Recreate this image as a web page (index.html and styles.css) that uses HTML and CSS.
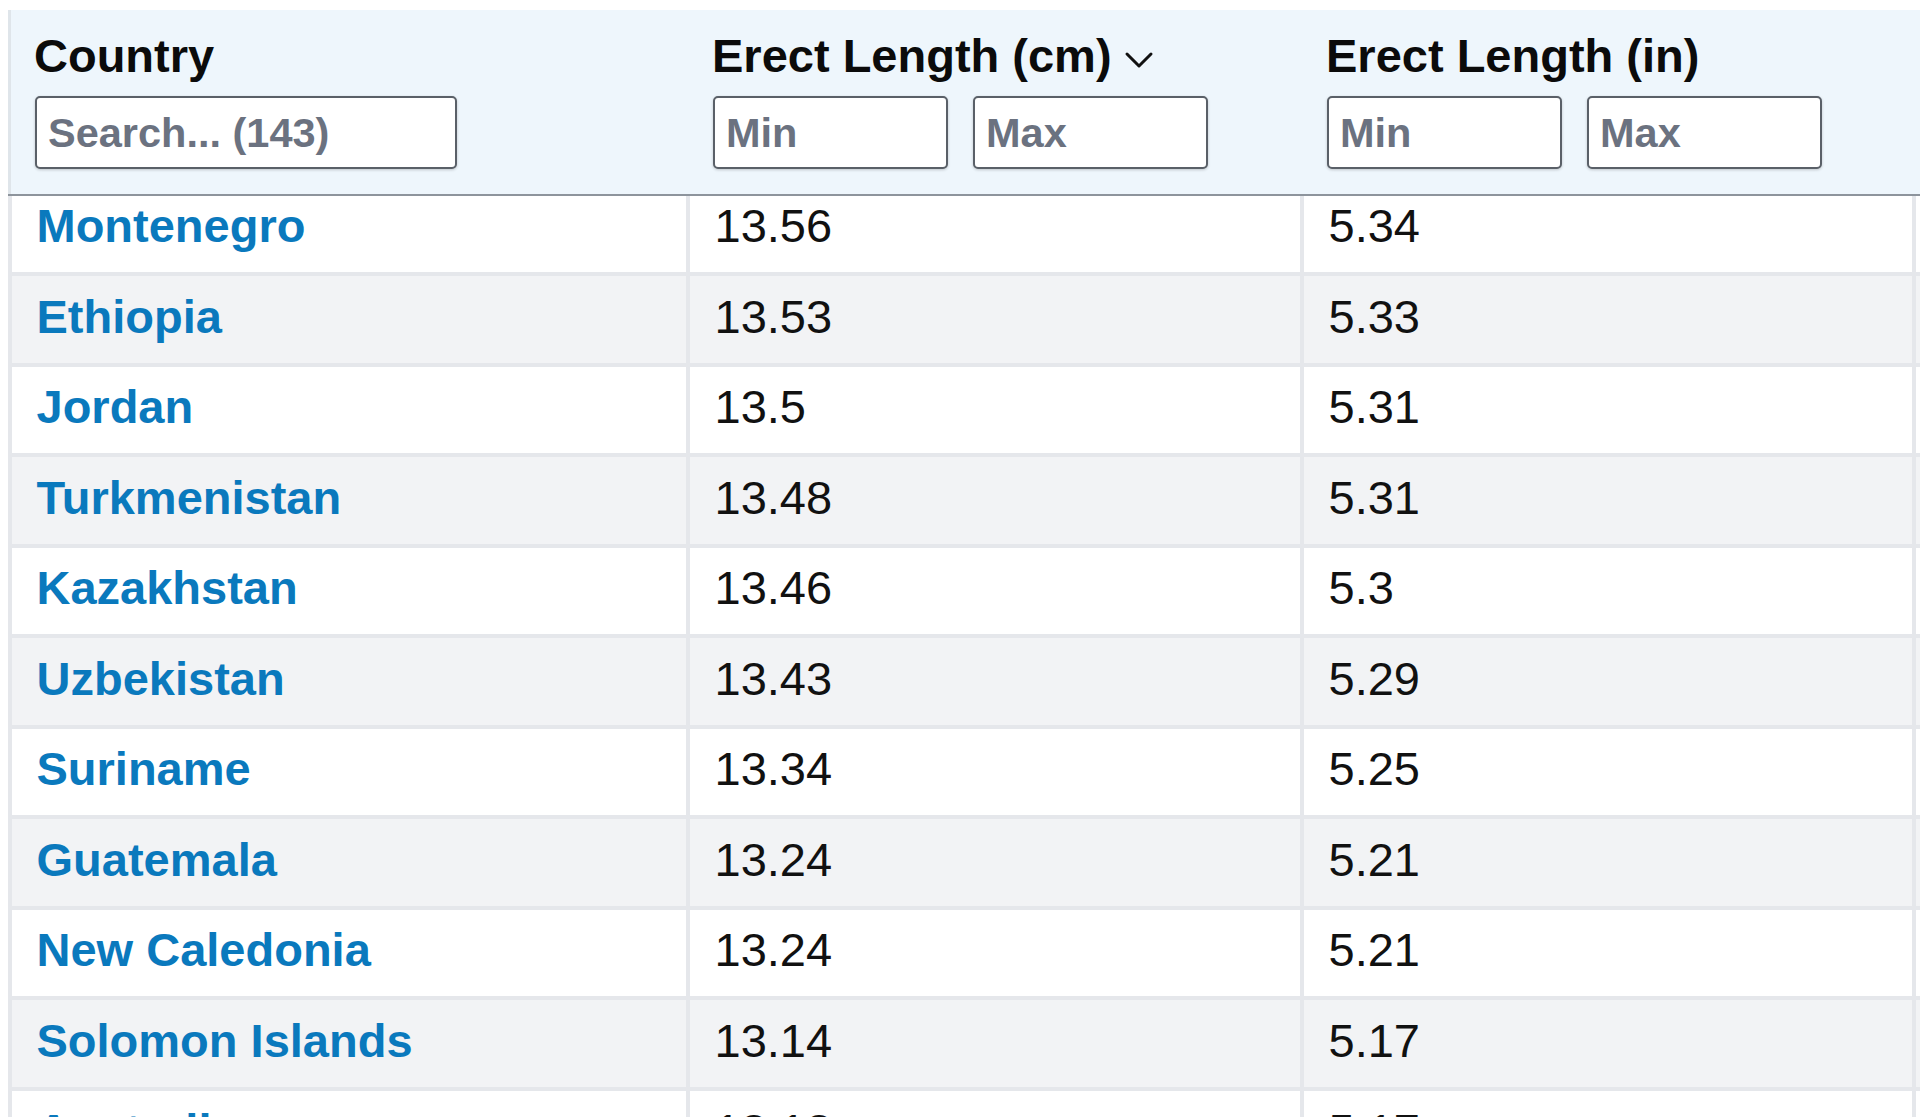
FILE: index.html
```html
<!DOCTYPE html>
<html lang="en">
<head>
<meta charset="utf-8">
<title>Erect Length by Country</title>
<link rel="stylesheet" href="styles.css">
</head>
<body>
<div class="viewport">
  <div class="table">
    <div class="thead">
      <div class="th">
        <div class="th-title">Country</div>
        <div class="filters">
          <input class="search" type="text" placeholder="Search... (143)">
        </div>
      </div>
      <div class="th">
        <div class="th-title">Erect Length (cm)
          <svg class="chev" width="30" height="20" viewBox="0 0 30 20"><path d="M3 4 L15 16 L27 4" fill="none" stroke="#111" stroke-width="3" stroke-linecap="round" stroke-linejoin="round"/></svg>
        </div>
        <div class="filters">
          <input class="range" type="text" placeholder="Min">
          <input class="range" type="text" placeholder="Max">
        </div>
      </div>
      <div class="th">
        <div class="th-title">Erect Length (in)</div>
        <div class="filters">
          <input class="range" type="text" placeholder="Min">
          <input class="range" type="text" placeholder="Max">
        </div>
      </div>
      <div class="th"></div>
    </div>
    <div class="tbody">
      <div class="tr"><div class="td"><a href="#">Montenegro</a></div><div class="td num">13.56</div><div class="td num">5.34</div><div class="td"></div></div>
      <div class="tr"><div class="td"><a href="#">Ethiopia</a></div><div class="td num">13.53</div><div class="td num">5.33</div><div class="td"></div></div>
      <div class="tr"><div class="td"><a href="#">Jordan</a></div><div class="td num">13.5</div><div class="td num">5.31</div><div class="td"></div></div>
      <div class="tr"><div class="td"><a href="#">Turkmenistan</a></div><div class="td num">13.48</div><div class="td num">5.31</div><div class="td"></div></div>
      <div class="tr"><div class="td"><a href="#">Kazakhstan</a></div><div class="td num">13.46</div><div class="td num">5.3</div><div class="td"></div></div>
      <div class="tr"><div class="td"><a href="#">Uzbekistan</a></div><div class="td num">13.43</div><div class="td num">5.29</div><div class="td"></div></div>
      <div class="tr"><div class="td"><a href="#">Suriname</a></div><div class="td num">13.34</div><div class="td num">5.25</div><div class="td"></div></div>
      <div class="tr"><div class="td"><a href="#">Guatemala</a></div><div class="td num">13.24</div><div class="td num">5.21</div><div class="td"></div></div>
      <div class="tr"><div class="td"><a href="#">New Caledonia</a></div><div class="td num">13.24</div><div class="td num">5.21</div><div class="td"></div></div>
      <div class="tr"><div class="td"><a href="#">Solomon Islands</a></div><div class="td num">13.14</div><div class="td num">5.17</div><div class="td"></div></div>
      <div class="tr"><div class="td"><a href="#">Australia</a></div><div class="td num">13.13</div><div class="td num">5.17</div><div class="td"></div></div>
    </div>
  </div>
</div>
</body>
</html>
```

FILE: styles.css
```css
* { box-sizing: border-box; }

html, body {
  margin: 0;
  padding: 0;
  background: #ffffff;
  font-family: "Liberation Sans", Arial, sans-serif;
}

.viewport {
  width: 1920px;
  height: 1117px;
  overflow: hidden;
  padding: 10px 0 0 8px;
}

.table {
  width: 2320px;
}

.thead {
  position: relative;
  z-index: 2;
  display: grid;
  grid-template-columns: 678px 614px 612px 416px;
  background: #eef6fc;
  border-bottom: 2px solid #8d949c;
  height: 186px;
}

.th {
  padding: 19px 0 0 27px;
}

.th:first-child {
  border-left: 3px solid #dfe5ea;
  padding-left: 24px;
}

.th-title {
  display: flex;
  align-items: center;
  margin-left: -1px;
  height: 54px;
  font-size: 47px;
  line-height: 54px;
  font-weight: 700;
  color: #0b0b0b;
  white-space: nowrap;
}

.chev {
  margin-left: 12px;
  margin-top: 7px;
}

.filters {
  display: flex;
  gap: 25px;
  margin-top: 13px;
}

input {
  height: 73px;
  border: 2px solid #5a6068;
  border-radius: 5px;
  background: #ffffff;
  box-shadow: 0 1px 3px rgba(0, 0, 0, 0.2);
  padding: 0 11px;
  font-family: "Liberation Sans", Arial, sans-serif;
  font-size: 41.5px;
  font-weight: 700;
  color: #111;
  outline: none;
}

input::placeholder {
  color: #6b7280;
  opacity: 1;
}

.search { width: 422px; }
.range { width: 235px; }

.tbody {
  margin-top: -10.5px;
  position: relative;
  z-index: 1;
}

.tr {
  display: grid;
  grid-template-columns: 678px 614px 612px 416px;
  height: 90.5px;
  border-bottom: 4px solid #e5e7eb;
  background: #ffffff;
}

.tr:nth-child(even) {
  background: #f2f3f5;
}

.td {
  display: flex;
  align-items: center;
  border-left: 4px solid #e5e7eb;
  padding: 0 0 5px 24.5px;
  font-size: 47px;
  line-height: 54px;
  white-space: nowrap;
}

.td a {
  color: #0a79bd;
  font-weight: 700;
  text-decoration: none;
}

.num {
  color: #111;
}
```
